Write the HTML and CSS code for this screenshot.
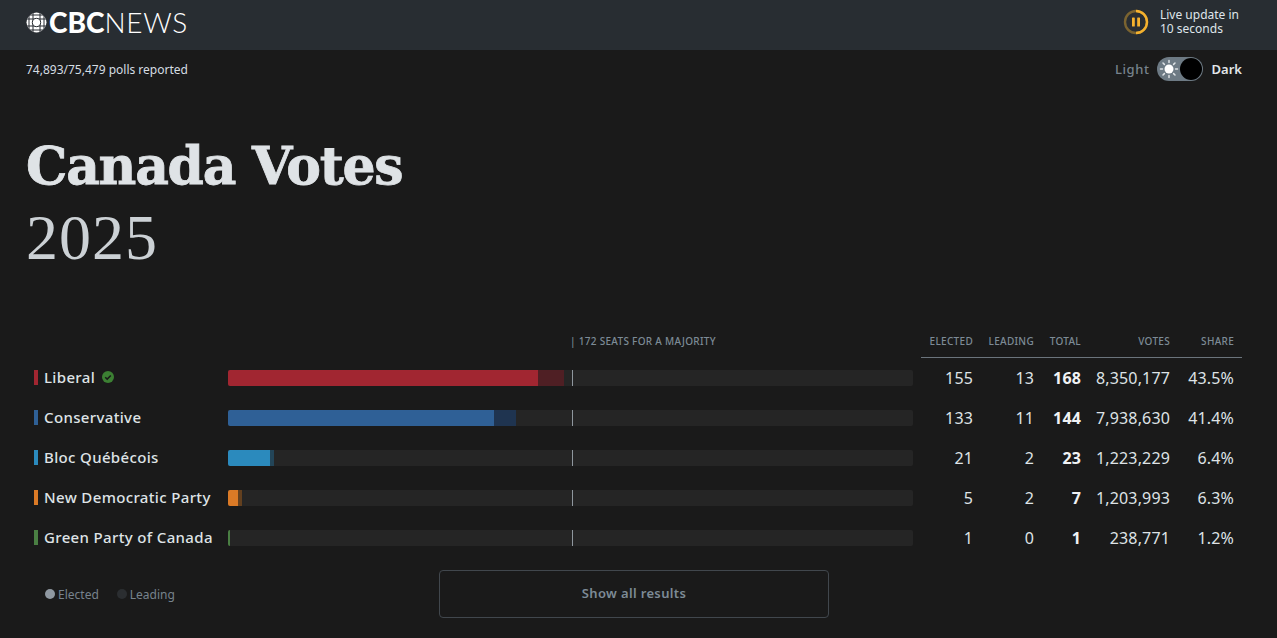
FILE: index.html
```html
<!DOCTYPE html>
<html lang="en">
<head>
<meta charset="utf-8">
<title>Canada Votes 2025</title>
<link rel="stylesheet" href="styles.css">
</head>
<body>
<header class="topbar">
  <div class="logo">
    <svg class="gem" width="21" height="21" viewBox="0 0 21 21" aria-hidden="true">
      <circle cx="10.5" cy="10.5" r="10" fill="#fff"/>
      <g stroke="#282d32" stroke-width="1" fill="none">
        <path d="M3 0v21M7 0v21M14 0v21M18 0v21M0 3h21M0 7h21M0 14h21M0 18h21"/>
        <circle cx="10.5" cy="10.5" r="4.2" fill="#fff"/>
      </g>
    </svg>
    <span class="wordmark"><b>CBC</b><span>NEWS</span></span>
  </div>
  <div class="live">
    <svg width="26" height="26" viewBox="0 0 26 26" aria-hidden="true">
      <circle cx="13" cy="13" r="11" fill="none" stroke="#7a6330" stroke-width="2.4"/>
      <path d="M13 2A11 11 0 0 1 13 24" fill="none" stroke="#f4b12e" stroke-width="2.4"/>
      <rect x="9" y="8.5" width="2.8" height="9" rx=".6" fill="#f4b12e"/>
      <rect x="14.2" y="8.5" width="2.8" height="9" rx=".6" fill="#f4b12e"/>
    </svg>
    <p class="live-text">Live update in<br>10 seconds</p>
  </div>
</header>

<div class="status">
  <p class="polls">74,893/75,479 polls reported</p>
  <div class="theme">
    <span class="theme-light">Light</span>
    <div class="switch">
      <svg width="22" height="22" viewBox="0 0 22 22" aria-hidden="true">
        <circle cx="11" cy="11" r="4.5" fill="#fff"/>
        <g stroke="#dfe3e6" stroke-width="1.5" stroke-linecap="round">
          <path d="M11 2.5v2M11 17.5v2M2.5 11h2M17.5 11h2M5 5l1.4 1.4M15.6 15.6L17 17M5 17l1.4-1.4M15.6 6.4L17 5"/>
        </g>
      </svg>
      <span class="knob"></span>
    </div>
    <span class="theme-dark">Dark</span>
  </div>
</div>

<h1 class="title"><strong>Canada Votes</strong><span>2025</span></h1>

<section class="results">
  <div class="row head">
    <div></div>
    <div class="majority">| 172 SEATS FOR A MAJORITY</div>
    <div class="nums-head">
      <span>ELECTED</span><span>LEADING</span><span>TOTAL</span><span>VOTES</span><span>SHARE</span>
    </div>
  </div>

  <div class="row">
    <div class="party"><i class="mark lib"></i>Liberal
      <svg class="check" width="12" height="12" viewBox="0 0 12 12" aria-hidden="true"><circle cx="6" cy="6" r="6" fill="#3c8033"/><path d="M3.2 6.2l2 1.9 3.6-3.7" fill="none" stroke="#1a1a1a" stroke-width="1.5"/></svg>
    </div>
    <div class="track"><div class="fill lib" style="width:45.19%"></div><div class="fill lib-lead" style="width:3.79%"></div><i class="tick"></i></div>
    <div class="nums"><span>155</span><span>13</span><b>168</b><span>8,350,177</span><span>43.5%</span></div>
  </div>

  <div class="row">
    <div class="party"><i class="mark con"></i>Conservative</div>
    <div class="track"><div class="fill con" style="width:38.78%"></div><div class="fill con-lead" style="width:3.21%"></div><i class="tick"></i></div>
    <div class="nums"><span>133</span><span>11</span><b>144</b><span>7,938,630</span><span>41.4%</span></div>
  </div>

  <div class="row">
    <div class="party"><i class="mark bloc"></i>Bloc Québécois</div>
    <div class="track"><div class="fill bloc" style="width:6.12%"></div><div class="fill bloc-lead" style="width:.58%"></div><i class="tick"></i></div>
    <div class="nums"><span>21</span><span>2</span><b>23</b><span>1,223,229</span><span>6.4%</span></div>
  </div>

  <div class="row">
    <div class="party"><i class="mark ndp"></i>New Democratic Party</div>
    <div class="track"><div class="fill ndp" style="width:1.46%"></div><div class="fill ndp-lead" style="width:.58%"></div><i class="tick"></i></div>
    <div class="nums"><span>5</span><span>2</span><b>7</b><span>1,203,993</span><span>6.3%</span></div>
  </div>

  <div class="row">
    <div class="party"><i class="mark grn"></i>Green Party of Canada</div>
    <div class="track"><div class="fill grn" style="width:.29%"></div><i class="tick"></i></div>
    <div class="nums"><span>1</span><span>0</span><b>1</b><span>238,771</span><span>1.2%</span></div>
  </div>
</section>

<footer class="foot">
  <div class="legend">
    <span class="key"><i class="dot dot-e"></i>Elected</span>
    <span class="key"><i class="dot dot-l"></i>Leading</span>
  </div>
  <button class="more" type="button">Show all results</button>
</footer>
</body>
</html>
```

FILE: styles.css
```css
* { box-sizing: border-box; }
html, body { margin: 0; height: 100%; }
body {
  background: #1a1a1a;
  color: #e2e6e9;
  font-family: "Noto Sans", "Open Sans", sans-serif;
  overflow: hidden;
}
p { margin: 0; }

.topbar {
  height: 50px;
  background: #282d32;
  display: flex;
  align-items: center;
  justify-content: space-between;
  padding: 0 35px 6px 26px;
}
.logo { display: flex; align-items: center; gap: 2px; }
.gem { display: block; }
.wordmark {
  font-family: Lato, sans-serif;
  font-size: 28px;
  line-height: 22px;
  color: #fff;
}
.wordmark b { font-weight: 900; }
.wordmark span { font-weight: 300; letter-spacing: .7px; }

.live { display: flex; align-items: center; gap: 11px; padding-right: 3px; }
.live svg { display: block; }
.live-text { font-size: 12px; line-height: 14px; color: #dfe5ea; }

.status {
  height: 40px;
  display: flex;
  align-items: center;
  justify-content: space-between;
  padding: 0 35px 2px 26px;
}
.polls { font-size: 12px; color: #d5dde3; }
.theme { display: flex; align-items: center; }
.theme-light { font-size: 13px; font-weight: 500; color: #77838d; letter-spacing: .6px; }
.theme-dark { font-size: 13px; font-weight: 600; color: #e2e6e9; margin-left: 9px; }
.switch {
  width: 46px;
  height: 24px;
  margin-left: 7px;
  border-radius: 12px;
  background: #6d7a84;
  display: flex;
  align-items: center;
  justify-content: space-between;
  padding: 0 1px;
}
.switch svg { display: block; }
.knob { width: 22px; height: 22px; border-radius: 50%; background: #000; }

.title {
  margin: 40px 0 0 26px;
  font-weight: 400;
  color: #dfe3e6;
}
.title strong {
  display: block;
  font-family: "DejaVu Serif", serif;
  font-weight: 700;
  font-size: 52px;
  line-height: 72px;
  letter-spacing: -1.25px;
  -webkit-text-stroke: .8px #dfe3e6;
}
.title span {
  display: block;
  font-family: "Liberation Serif", serif;
  font-size: 64px;
  line-height: 72px;
  letter-spacing: 1px;
  color: #ccd1d5;
}

.results { margin-top: 55px; padding: 0 35px 0 26px; }
.row {
  display: grid;
  grid-template-columns: 202px 685px 8px 321px;
  height: 40px;
  align-items: center;
}
.row > .nums, .row > .nums-head { grid-column: 4; }
.row.head { height: 29px; align-items: stretch; }
.majority {
  font-size: 10px;
  font-weight: 500;
  color: #7d8b96;
  letter-spacing: .3px;
  padding-left: 342px;
  line-height: 24px;
}
.nums-head, .nums {
  display: grid;
  grid-template-columns: 52px 61px 47px 89px 64px 8px;
  justify-items: end;
  align-items: center;
}
.nums-head {
  border-bottom: 1px solid #6b747c;
  font-size: 10px;
  font-weight: 500;
  letter-spacing: .3px;
  color: #7d8b96;
  line-height: 24px;
  height: 29px;
  align-items: start;
}
.nums { font-size: 16px; letter-spacing: .15px; color: #dfe3e6; }
.nums b { font-weight: 700; color: #f0f2f4; }

.party {
  display: flex;
  align-items: center;
  padding: 0 0 2px 8px;
  font-size: 15px;
  font-weight: 500;
  letter-spacing: .35px;
  color: #dfe3e6;
  white-space: nowrap;
}
.mark { width: 4px; height: 15px; margin-right: 6px; flex: none; }
.check { margin-left: 7px; }

.track {
  position: relative;
  display: flex;
  height: 16px;
  border-radius: 2px;
  background: #252525;
}
.fill { height: 100%; }
.fill:first-child { border-radius: 2px 0 0 2px; }
.tick { position: absolute; left: 50.2%; top: 0; bottom: 0; width: 1px; background: #8f979e; }

.lib { background: #a12631; }
.lib-lead { background: #4f1f24; }
.con { background: #2f6096; }
.con-lead { background: #1f3450; }
.bloc { background: #2b8abd; }
.bloc-lead { background: #234558; }
.ndp { background: #db7a26; }
.ndp-lead { background: #63401f; }
.grn { background: #4a7f43; }

.foot { display: grid; grid-template-columns: 413px 390px; padding: 12px 0 0 26px; }
.legend { display: flex; align-items: center; gap: 18px; padding-left: 19px; }
.key { display: flex; align-items: center; gap: 3px; font-size: 12px; color: #77838d; }
.dot { width: 10px; height: 10px; border-radius: 50%; }
.dot-e { background: #8f98a1; }
.dot-l { background: #2b2e31; }
.more {
  height: 48px;
  padding: 0 0 2px;
  border: 1px solid #41474d;
  border-radius: 4px;
  background: transparent;
  color: #7d8b96;
  font-family: inherit;
  font-size: 13px;
  font-weight: 600;
  letter-spacing: .35px;
}
```
